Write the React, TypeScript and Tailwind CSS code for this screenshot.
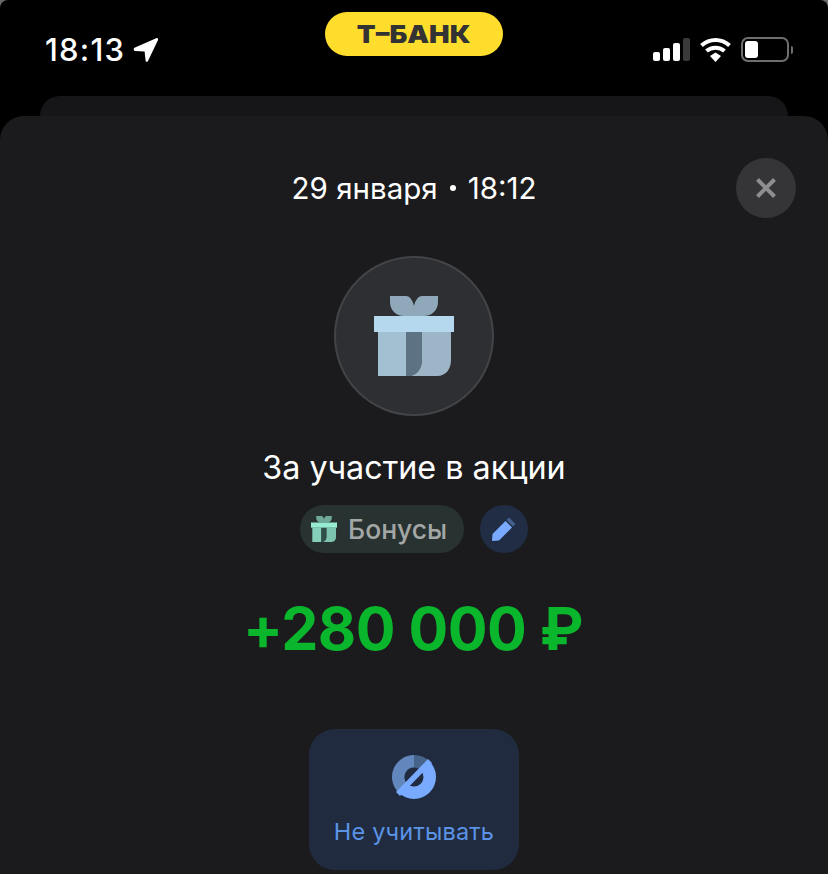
import React from "react";

interface GiftColors {
  bow: string;
  left: string;
  strip: string;
  right: string;
  lid: string;
}

const blueGift: GiftColors = { bow: "#8fa9bb", left: "#a3bfd2", strip: "#5d7282", right: "#9db6c7", lid: "#b5d8ef" };
const mintGift: GiftColors = { bow: "#6fa898", left: "#84d0ba", strip: "#2f4f48", right: "#7cc4af", lid: "#96ecd2" };

function GiftIcon({ className, colors }: { className?: string; colors: GiftColors }) {
  return (
    <svg viewBox="0 0 80 80" className={className}>
      {/* bow */}
      <path d="M16 0H32C36 0 39 5 40 10C41 5 44 0 48 0H64V6C64 14 58 20 50 20H30C22 20 16 14 16 6Z" fill={colors.bow} />
      {/* box */}
      <path d="M4 36H32V80H4Z" fill={colors.left} />
      <path d="M32 36H48V64C48 72 44 78 37 80H32Z" fill={colors.strip} />
      <path d="M48 36H77V64C77 73 72 80 63 80H37C44 78 48 72 48 64Z" fill={colors.right} />
      {/* lid */}
      <rect x="0" y="20" width="80" height="16" fill={colors.lid} />
    </svg>
  );
}

function StatusBar() {
  return (
    <div className="relative h-[96px] shrink-0 flex items-start justify-between pl-[45px] pr-[35px] pt-[32px]">
      <div className="flex items-center gap-[8px]">
        <span className="text-[31px] leading-[36px] tracking-[1.2px] font-medium text-white">18:13</span>
        <svg viewBox="0 0 26 26" className="w-[26px] h-[26px]" fill="#fff">
          <path d="M1.5 10.8L23.2 1.2C24.5 0.7 25.5 1.7 25 3L15 24C14.4 25.3 12.8 25.1 12.6 23.7L11.6 14.6L2 13.9C0.4 13.8 0.2 11.4 1.5 10.8Z" />
        </svg>
      </div>
      <div className="absolute left-[325px] top-[12px] w-[178px] h-[44px] rounded-full bg-[#ffdd2d] flex items-center justify-center">
        <span className="text-[25px] leading-none font-black text-[#333333] scale-x-[1.1]">Т–БАНК</span>
      </div>
      <div className="flex items-center gap-[10px] h-[35px]">
        <div className="flex items-end gap-[3px] h-[23px]">
          <div className="w-[7px] h-[9px] rounded-[2px] bg-white" />
          <div className="w-[7px] h-[13px] rounded-[2px] bg-white" />
          <div className="w-[7px] h-[18px] rounded-[2px] bg-white" />
          <div className="w-[7px] h-[23px] rounded-[2px] bg-[#3a3a3a]" />
        </div>
        <svg viewBox="0 0 31 25" className="w-[31px] h-[25px]" fill="none">
          <path d="M1.5 8.5C9.5 1 21.5 1 29.5 8.5" stroke="#fff" strokeWidth="4" />
          <path d="M6.5 14C11.5 9.5 19.5 9.5 24.5 14" stroke="#fff" strokeWidth="4" />
          <path d="M10 19L15.5 15.5L21 19L15.5 25Z" fill="#fff" />
        </svg>
        <div className="flex items-center gap-[2px]">
          <div className="w-[48px] h-[25px] rounded-[7px] border-2 border-[#6e6e6e] p-[2px]">
            <div className="w-[13px] h-full rounded-[3px] bg-white" />
          </div>
          <div className="w-[2px] h-[8px] rounded-r-full bg-[#6e6e6e]" />
        </div>
      </div>
    </div>
  );
}

export default function App() {
  return (
    <div className="w-[828px] h-[874px] overflow-hidden bg-[#6b6b6b] font-['Inter',sans-serif]">
      <div className="h-full rounded-t-[8px] bg-black flex flex-col">
        <StatusBar />
        <div className="h-[20px] shrink-0 mx-[40px] rounded-t-[20px] bg-[#161618]" />
        <div className="flex-1 rounded-t-[24px] bg-[#1b1b1d] relative flex flex-col items-center">
          <button className="absolute right-[32px] top-[42px] w-[60px] h-[60px] rounded-full bg-[#353537] flex items-center justify-center">
            <svg viewBox="0 0 20 20" className="w-[20px] h-[20px]">
              <path d="M1.5 1.5L18.5 18.5M18.5 1.5L1.5 18.5" stroke="#8e8e90" strokeWidth="4" />
            </svg>
          </button>
          <div className="mt-[54px] h-[36px] text-[29.5px] leading-[36px] text-white flex items-center gap-[12px]">
            <span>29 января</span>
            <span className="w-[6px] h-[6px] rounded-full bg-white" />
            <span>18:12</span>
          </div>
          <div className="mt-[50px] w-[160px] h-[160px] rounded-full bg-[#2e2f33] border-2 border-[#434447] flex items-center justify-center">
            <GiftIcon className="w-[80px] h-[80px]" colors={blueGift} />
          </div>
          <div className="mt-[32px] h-[40px] text-[32.3px] leading-[40px] text-white">За участие в акции</div>
          <div className="mt-[17px] flex items-center gap-[16px]">
            <div className="h-[48px] w-[164px] rounded-full bg-[#283230] flex items-center pl-[11px] gap-[11px]">
              <GiftIcon className="w-[26px] h-[26px]" colors={mintGift} />
              <span className="text-[26.5px] leading-none font-medium text-[#a3a7a6]">Бонусы</span>
            </div>
            <div className="w-[48px] h-[48px] rounded-full bg-[#212d45] flex items-center justify-center">
              <svg viewBox="0 0 26 26" className="w-[26px] h-[26px]">
                <path d="M18 1.5L24.5 8L22 10.5L15.5 4Z" fill="#44608f" />
                <path d="M14.5 5L21 11.5L8 24.5L1 25L1.5 18Z" fill="#78aaff" />
              </svg>
            </div>
          </div>
          <div className="mt-[42px] h-[68px] text-[59px] leading-[68px] font-bold text-[#0ab62c] tracking-[-0.5px] -translate-x-px">
            +280 000 ₽
          </div>
          <div className="mt-[66px] w-[210px] h-[141px] rounded-[26px] bg-[#202b3f] flex flex-col items-center pt-[25px]">
            <svg viewBox="0 0 46 46" className="w-[46px] h-[46px]">
              <path d="M7.44 38.56A22 22 0 0 1 23 1V13.5A9.5 9.5 0 0 0 16.28 29.72Z" fill="#6287bd" />
              <path d="M23 1A22 22 0 0 1 38.56 7.44L29.72 16.28A9.5 9.5 0 0 0 23 13.5Z" fill="#466389" />
              <path d="M38.56 7.44A22 22 0 0 1 7.44 38.56L16.28 29.72A9.5 9.5 0 0 0 29.72 16.28Z" fill="#78aaff" />
              <path d="M5 38L37 5L41 9L9 42Z" fill="#78aaff" />
            </svg>
            <span className="mt-[18px] text-[23.5px] leading-[28px] text-[#5b93e6] tracking-[0.2px]">Не учитывать</span>
          </div>
        </div>
      </div>
    </div>
  );
}
